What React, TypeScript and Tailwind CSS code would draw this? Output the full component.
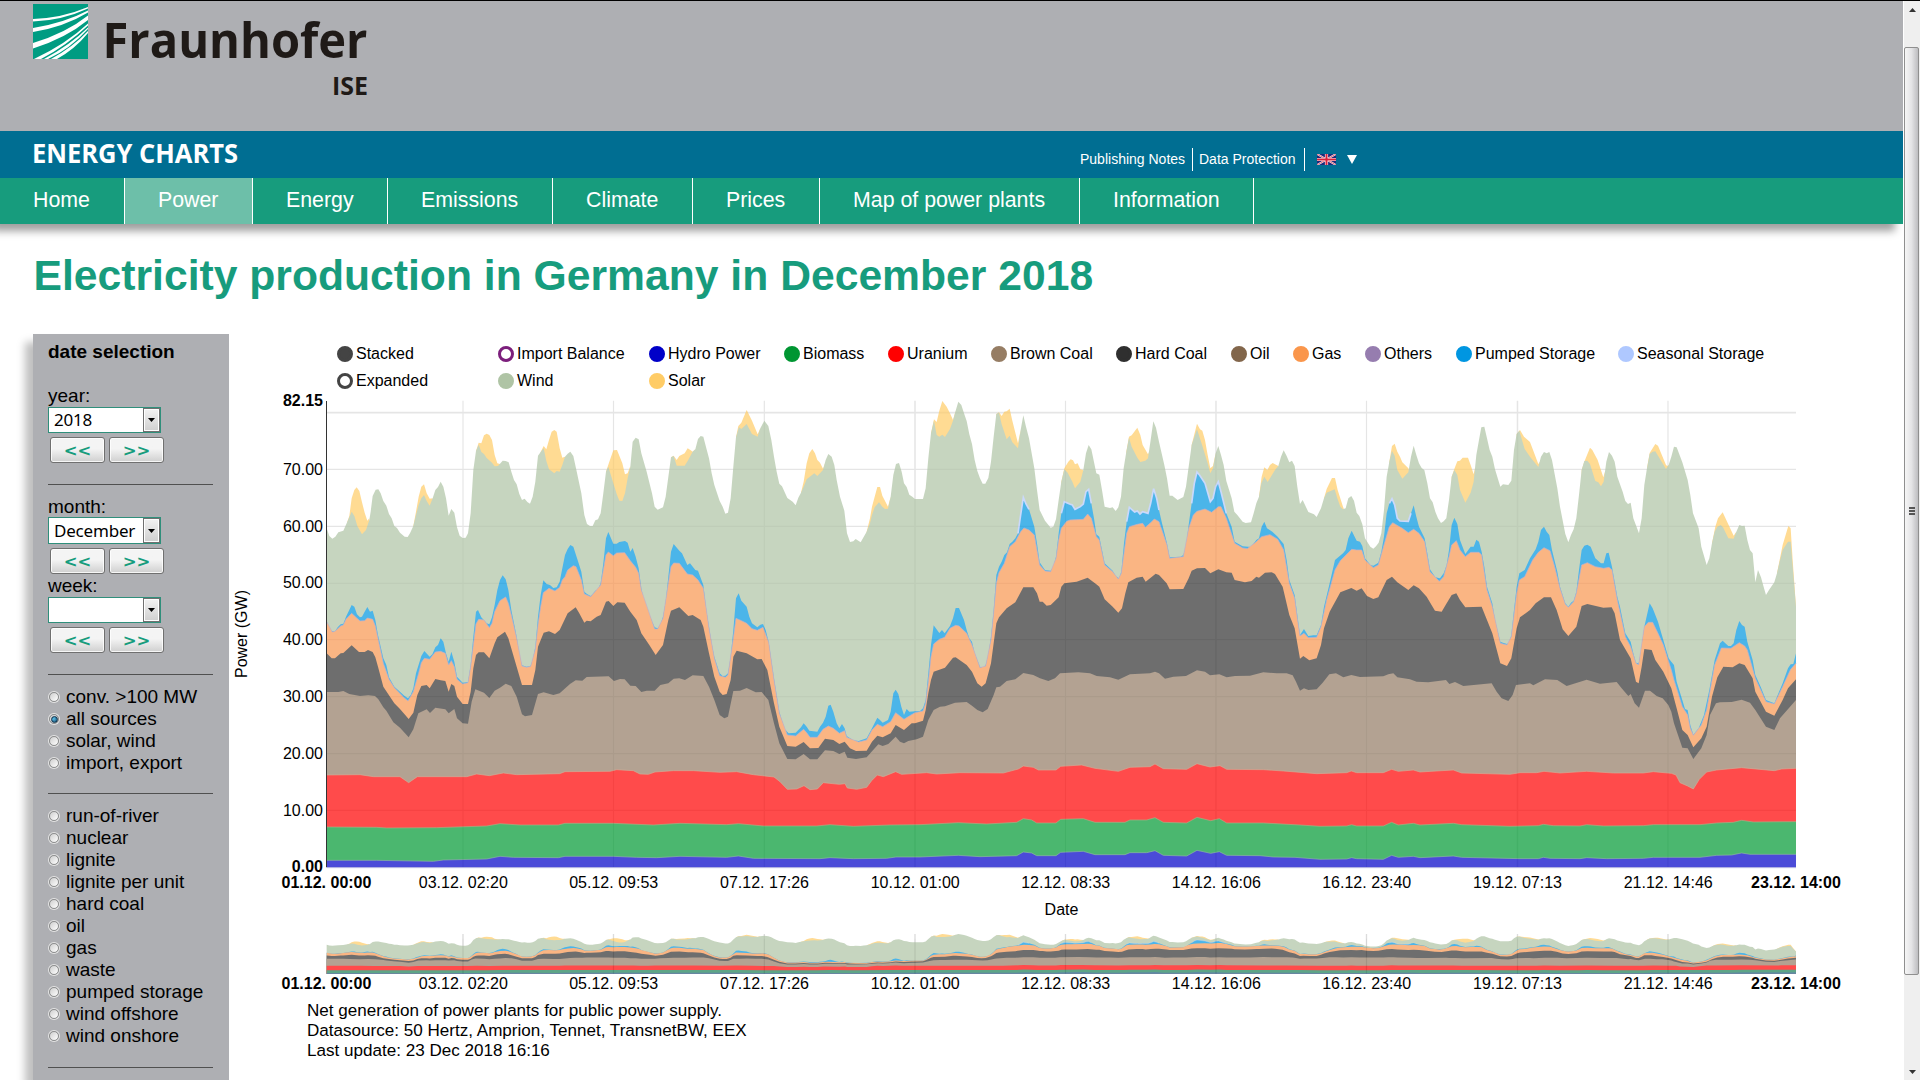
import React from "react";

type Pt = [number, number];

const parse = (s: string): Pt[] =>
  s
    .trim()
    .split(/\s+/)
    .map((p) => p.split(",").map(Number) as Pt);

const BASE = 1432;

const WIND = parse(`20,415 28,438 37,446 46,440 55,427 70,422 82,395 95,365 103,378 112,408 126,433 138,420 148,390 152,365 158,318 167,299 175,298 182,310 190,333 199,347 207,372 215,385 223,408 231,414 240,428 254,440 263,441 270,430 280,408 288,375 296,345 304,325 312,315 320,333 329,347 338,325 346,300 354,291 362,275 370,290 378,325 386,377 394,357 403,368 411,412 419,437 428,444 437,443 444,430 452,370 460,240 468,183 476,164 484,186 492,192 500,204 516,218 524,229 534,228 548,212 557,213 566,217 574,245 582,270 590,283 598,312 606,330 614,326 622,336 630,341 638,320 646,275 654,197 662,186 671,175 679,213 687,238 703,250 710,243 719,245 727,225 735,200 743,191 751,185 760,198 768,235 784,310 793,375 801,402 810,408 818,408 826,391 834,388 842,370 850,310 858,245 865,230 880,280 890,312 898,332 907,333 915,310 923,265 931,230 938,155 947,143 956,148 964,190 980,245 996,310 1004,350 1013,359 1029,352 1037,320 1053,202 1061,198 1070,227 1094,227 1103,213 1118,185 1126,178 1134,147 1142,138 1150,140 1159,175 1167,205 1175,250 1183,285 1199,333 1208,350 1216,371 1224,368 1232,325 1240,230 1248,142 1257,112 1264,117 1280,102 1296,132 1313,140 1321,115 1333,92 1345,108 1354,150 1362,200 1370,245 1378,281 1386,289 1402,324 1418,335 1427,346 1435,323 1443,308 1451,290 1460,268 1483,250 1492,258 1509,240 1517,210 1525,192 1535,200 1543,225 1550,270 1560,320 1573,362 1581,430 1590,456 1600,454 1607,447 1622,457 1631,441 1640,425 1650,400 1656,375 1664,352 1677,337 1687,350 1695,357 1704,356 1712,320 1720,255 1728,222 1737,219 1745,245 1752,280 1760,291 1768,314 1777,320 1785,327 1809,327 1817,295 1825,205 1833,130 1842,92 1850,135 1858,140 1867,134 1875,141 1890,117 1899,92 1907,62 1915,35 1924,45 1932,70 1940,93 1948,133 1956,162 1964,210 1972,243 1980,265 1988,281 1996,281 2005,264 2013,215 2021,140 2029,72 2037,68 2045,103 2060,148 2069,137 2077,157 2094,175 2102,120 2110,76 2118,110 2127,145 2143,235 2151,300 2159,360 2175,392 2192,413 2200,410 2208,388 2216,330 2224,275 2233,238 2243,248 2257,275 2265,295 2281,275 2290,240 2298,190 2306,165 2314,178 2329,250 2338,254 2346,300 2354,350 2370,354 2378,352 2387,363 2395,352 2403,320 2411,235 2419,185 2427,143 2435,170 2452,203 2461,216 2476,212 2484,205 2492,150 2500,94 2508,113 2517,155 2533,225 2541,265 2549,317 2557,317 2573,330 2590,321 2598,290 2606,230 2615,165 2631,118 2647,167 2663,220 2671,250 2679,235 2687,190 2695,168 2703,195 2711,225 2719,273 2735,325 2743,365 2752,375 2768,395 2777,399 2793,397 2801,370 2809,340 2817,320 2824,280 2833,260 2843,276 2865,240 2875,228 2883,200 2891,181 2900,198 2908,217 2916,212 2924,228 2932,290 2940,342 2948,330 2965,366 2982,373 2990,381 3003,355 3012,325 3020,308 3044,298 3052,325 3061,350 3069,358 3077,355 3085,325 3094,318 3102,332 3110,368 3118,378 3127,403 3135,445 3151,470 3160,476 3168,469 3176,458 3184,430 3192,360 3200,260 3208,215 3216,183 3224,197 3232,240 3247,266 3265,247 3273,200 3281,167 3289,195 3297,220 3305,234 3313,240 3322,280 3330,325 3338,337 3346,365 3354,385 3363,399 3371,394 3379,385 3387,330 3395,260 3403,240 3412,255 3420,300 3436,338 3452,308 3461,275 3469,195 3477,150 3484,112 3493,110 3501,145 3509,180 3517,200 3525,238 3541,290 3549,283 3565,285 3574,272 3582,180 3590,132 3598,122 3606,150 3614,177 3630,200 3655,231 3663,200 3672,186 3680,190 3688,186 3696,210 3712,295 3720,350 3736,432 3745,457 3753,435 3761,418 3769,385 3777,315 3785,240 3793,213 3802,212 3810,222 3826,273 3835,277 3843,289 3851,275 3859,215 3867,186 3876,197 3884,215 3892,260 3908,305 3916,333 3924,342 3932,338 3940,385 3957,430 3965,385 3973,285 3981,235 3989,192 3998,185 4006,184 4038,237 4046,225 4054,200 4062,170 4070,172 4087,217 4103,270 4111,315 4119,370 4136,415 4144,470 4160,525 4168,505 4176,460 4184,425 4192,410 4202,405 4209,412 4225,445 4241,446 4249,425 4258,405 4266,408 4274,407 4282,450 4290,480 4298,490 4306,577 4314,540 4323,562 4330,587 4338,615 4347,600 4363,577 4371,550 4379,515 4388,480 4404,455 4412,455 4418,530 4428,650`);

const SOLAR = [
  "82,395 88,378 95,325 103,300 110,292 118,303 126,337 134,368 142,392 148,385",
  "280,408 288,365 296,320 304,290 312,283 320,310 329,326 338,325",
  "468,183 476,158 484,160 492,136 500,131 508,135 516,150 524,195 532,220 540,222",
  "662,186 671,168 679,178 687,150 695,125 703,120 710,125 719,175 727,203 735,200",
  "858,245 868,215 880,181 891,180 907,220 915,253 923,250 931,228",
  "1053,202 1061,197 1070,210 1078,198 1094,190 1103,175 1111,180 1118,185 1126,178",
  "1248,142 1255,108 1264,98 1280,60 1296,92 1313,133 1321,115",
  "1443,308 1451,275 1460,220 1468,190 1477,177 1485,190 1492,210 1500,218 1509,236 1517,215",
  "1640,425 1650,385 1656,350 1672,291 1680,291 1687,317 1704,350 1712,320",
  "1833,130 1842,88 1850,96 1858,62 1867,33 1880,50 1890,70 1899,90 1907,62",
  "2029,72 2037,67 2045,78 2053,65 2060,64 2069,56 2077,92 2094,160 2102,120",
  "2224,275 2233,235 2245,215 2252,208 2259,211 2265,223 2273,220 2281,238 2290,240",
  "2419,185 2427,140 2435,136 2452,113 2461,135 2468,165 2484,193 2487,187",
  "2615,165 2631,101 2640,118 2647,122 2655,150 2663,195 2671,235 2679,228 2687,190",
  "2817,320 2825,260 2833,232 2842,240 2850,225 2858,219 2865,223 2875,228",
  "3012,325 3020,297 3036,264 3045,264 3053,300 3069,350 3072,358",
  "3208,215 3216,168 3224,161 3232,185 3240,200 3247,217 3265,235 3267,240",
  "3395,260 3403,237 3412,214 3420,212 3428,203 3444,203 3452,225 3461,253 3465,235",
  "3590,132 3600,120 3612,140 3630,156 3655,222 3660,215",
  "3785,240 3793,215 3810,173 3817,180 3833,210 3850,262 3855,245",
  "3981,235 3989,189 3998,175 4006,162 4014,167 4038,225 4042,228 4046,225",
  "4176,460 4186,410 4194,385 4208,367 4241,437 4249,425",
  "4371,550 4379,510 4388,465 4397,435 4405,408 4412,415 4418,510 4428,650",
].map(parse);

const PUMPED = parse(`20,692 28,718 37,724 45,724 53,712 62,703 70,701 78,680 95,645 103,650 111,673 120,682 126,680 134,665 142,651 150,665 158,662 166,690 174,735 190,805 199,825 207,862 223,890 240,905 254,918 264,925 272,915 280,895 288,850 304,798 313,783 329,800 337,793 346,772 354,765 362,745 370,755 378,790 386,815 394,785 403,815 411,860 428,878 444,876 452,825 460,740 468,665 474,660 484,682 500,700 508,703 516,682 524,645 532,600 540,570 548,556 557,568 565,600 574,660 582,700 590,740 598,795 606,826 620,830 632,827 638,810 646,770 654,680 662,615 670,571 680,582 690,585 700,594 710,592 719,575 727,535 735,495 743,477 751,465 760,470 776,520 784,545 793,605 801,612 812,618 818,612 826,602 834,598 842,580 850,520 858,445 865,426 880,461 890,461 898,456 915,453 923,458 931,485 938,474 947,500 956,535 964,595 972,635 988,675 1004,712 1013,715 1021,705 1029,680 1037,635 1045,560 1053,485 1061,462 1078,482 1086,490 1102,525 1110,520 1126,540 1134,542 1150,585 1159,660 1167,710 1175,760 1183,800 1199,850 1208,858 1216,857 1224,850 1232,800 1240,720 1248,625 1256,610 1264,632 1280,650 1288,680 1296,700 1312,712 1321,704 1329,702 1337,720 1346,755 1362,865 1378,965 1394,1018 1406,1030 1427,1028 1443,1012 1451,1000 1460,1010 1468,1022 1492,1025 1500,1010 1509,998 1517,980 1525,947 1532,944 1540,965 1550,1000 1558,1015 1566,1002 1574,1015 1580,1038 1600,1051 1616,1053 1640,1045 1656,1015 1672,983 1680,990 1688,998 1704,990 1712,965 1720,910 1727,899 1735,912 1744,950 1752,975 1760,957 1768,965 1785,964 1800,963 1809,955 1817,930 1825,850 1833,765 1841,706 1858,729 1866,720 1874,730 1890,708 1899,685 1907,654 1917,654 1932,690 1940,720 1948,745 1956,755 1964,790 1980,830 1990,833 1997,825 2005,795 2013,740 2021,660 2029,555 2037,530 2045,515 2053,495 2061,487 2069,462 2077,455 2086,445 2094,430 2102,375 2110,322 2118,342 2127,358 2143,410 2151,460 2159,517 2175,540 2192,542 2200,530 2208,500 2216,430 2224,370 2233,335 2249,342 2257,345 2265,358 2281,350 2290,342 2298,305 2306,298 2314,340 2322,385 2329,433 2338,440 2346,480 2354,520 2370,535 2378,542 2387,558 2397,565 2404,545 2412,460 2420,395 2428,352 2444,366 2452,363 2460,372 2468,365 2484,370 2492,340 2501,296 2510,325 2517,360 2525,395 2541,460 2549,502 2582,500 2590,495 2598,470 2606,405 2615,340 2623,280 2631,246 2639,256 2655,280 2671,335 2679,325 2687,290 2695,275 2703,305 2719,370 2735,410 2744,455 2768,469 2793,471 2809,450 2817,445 2825,410 2833,395 2841,415 2857,425 2873,440 2891,462 2900,510 2908,570 2924,615 2932,675 2940,735 2952,717 2965,738 2980,736 2990,736 3003,705 3012,650 3029,580 3045,510 3069,490 3077,480 3085,445 3095,422 3110,452 3120,455 3127,468 3135,505 3151,525 3160,527 3175,518 3184,485 3192,440 3200,370 3208,340 3216,326 3224,345 3232,385 3240,393 3265,394 3273,370 3281,346 3289,380 3297,410 3314,445 3322,490 3330,538 3346,562 3360,565 3371,550 3380,525 3387,480 3395,405 3403,383 3412,402 3420,450 3436,492 3452,470 3461,470 3469,449 3477,455 3485,485 3493,530 3501,590 3517,640 3525,690 3541,755 3549,758 3561,762 3568,757 3574,735 3582,660 3590,590 3598,550 3614,540 3630,505 3647,478 3655,455 3663,420 3672,410 3680,425 3688,435 3696,480 3712,545 3720,590 3736,640 3745,650 3753,638 3761,632 3769,605 3777,540 3785,480 3793,467 3802,464 3812,470 3826,505 3843,520 3851,520 3859,490 3866,488 3876,530 3892,620 3900,650 3916,730 3932,755 3940,790 3948,818 3956,820 3964,780 3973,710 3981,675 3989,640 3998,655 4014,695 4030,750 4046,805 4054,815 4062,825 4070,875 4087,930 4095,957 4103,960 4111,1005 4120,1034 4136,1015 4152,975 4168,900 4184,810 4200,760 4208,752 4225,768 4233,768 4241,760 4249,720 4258,693 4266,705 4274,710 4282,755 4298,810 4306,855 4322,890 4338,930 4363,940 4371,920 4388,880 4404,835 4412,823 4420,822 4428,790`);

const GAS = parse(`20,695 37,726 45,724 62,708 70,705 78,688 95,670 111,685 120,693 134,692 142,684 158,688 166,708 174,745 190,820 207,868 223,893 254,925 264,933 280,905 296,850 304,818 313,805 329,808 346,786 362,784 376,790 386,825 394,812 403,830 411,868 428,882 444,878 452,830 460,765 468,702 476,688 492,690 508,713 516,700 524,665 540,632 557,621 565,640 574,675 590,745 606,828 620,832 632,829 646,778 654,705 662,650 670,608 687,595 705,603 719,592 727,570 735,560 743,540 760,527 768,530 784,570 793,612 812,620 842,585 858,495 865,486 880,497 890,489 914,488 931,512 947,532 956,550 964,600 1004,717 1013,717 1029,685 1045,580 1053,530 1061,519 1078,520 1102,552 1118,555 1134,570 1150,595 1167,715 1183,805 1199,857 1216,862 1224,855 1240,745 1248,685 1264,692 1280,700 1296,716 1312,721 1329,712 1346,757 1362,870 1378,970 1402,1035 1427,1038 1451,1018 1460,1028 1470,1042 1492,1042 1509,1018 1525,1008 1540,1015 1558,1030 1574,1022 1580,1042 1616,1056 1640,1050 1656,1020 1672,1003 1688,1010 1712,995 1727,968 1752,988 1768,978 1785,968 1809,963 1817,940 1825,875 1833,800 1841,762 1858,748 1874,742 1890,715 1907,706 1917,708 1940,730 1956,765 1980,833 1997,828 2013,750 2021,670 2029,580 2037,548 2053,520 2069,470 2086,455 2102,425 2112,414 2127,420 2143,435 2159,525 2175,543 2192,545 2208,505 2216,450 2224,415 2240,394 2250,390 2290,388 2303,372 2314,385 2329,440 2338,450 2354,525 2378,545 2395,567 2404,550 2420,430 2428,410 2452,403 2468,400 2476,412 2492,398 2503,387 2517,395 2541,465 2549,505 2590,500 2606,415 2620,375 2631,364 2655,357 2675,367 2695,350 2703,350 2719,385 2744,460 2768,474 2782,476 2809,455 2825,440 2850,434 2873,448 2891,480 2908,580 2924,625 2932,685 2940,738 2952,730 2965,743 2990,742 3003,710 3020,630 3045,540 3061,512 3095,478 3110,480 3125,480 3135,510 3160,533 3175,525 3192,465 3208,410 3218,398 3247,415 3265,428 3281,418 3297,430 3314,455 3330,545 3358,574 3371,560 3387,500 3395,465 3409,452 3420,480 3436,500 3452,487 3477,487 3485,495 3501,600 3517,650 3541,760 3561,765 3574,740 3590,610 3598,570 3614,560 3638,510 3655,487 3672,473 3690,482 3704,530 3720,595 3736,643 3745,652 3761,635 3769,610 3785,525 3802,518 3826,530 3851,535 3867,532 3876,540 3892,630 3916,740 3932,770 3948,820 3956,824 3973,710 3985,697 3998,697 4014,730 4030,765 4054,840 4062,870 4087,950 4103,975 4111,1015 4120,1036 4144,1005 4160,960 4184,825 4204,774 4233,775 4258,758 4274,768 4282,780 4306,865 4338,935 4363,942 4388,890 4412,838 4428,820`);

const HARD = parse(`20,790 35,805 45,805 62,790 70,789 95,766 117,786 134,786 144,780 158,786 166,802 174,830 190,890 223,940 240,957 266,987 280,968 292,915 304,888 320,885 329,895 346,867 362,871 376,873 386,905 394,882 403,888 411,920 428,942 444,942 452,905 460,835 468,795 476,787 492,787 508,805 524,760 532,742 555,725 565,745 590,830 606,885 636,885 646,840 654,770 671,728 687,724 705,732 719,720 743,670 767,652 777,668 793,698 800,692 812,694 830,680 842,675 858,635 866,633 880,648 892,637 914,638 931,665 950,690 964,730 988,765 1007,795 1029,765 1045,690 1053,662 1078,652 1105,678 1118,675 1142,690 1150,710 1167,790 1183,860 1199,905 1208,915 1220,912 1232,870 1240,800 1250,782 1280,790 1312,808 1325,807 1342,840 1362,940 1378,1010 1402,1068 1427,1070 1451,1056 1470,1075 1495,1074 1515,1046 1540,1050 1558,1062 1574,1055 1590,1075 1608,1083 1640,1082 1656,1055 1672,1037 1688,1042 1712,1030 1727,1005 1752,1020 1775,1000 1785,1000 1809,992 1817,960 1825,910 1833,870 1841,845 1875,833 1899,803 1907,802 1940,825 1956,845 1972,880 1985,890 1997,880 2013,820 2021,760 2029,700 2037,682 2060,655 2086,637 2110,592 2140,592 2151,610 2159,635 2168,635 2180,647 2192,645 2216,622 2224,590 2233,580 2270,575 2303,563 2329,583 2338,590 2354,628 2378,650 2395,668 2406,655 2416,610 2425,577 2450,563 2468,560 2477,575 2492,563 2507,551 2517,555 2540,580 2549,598 2590,597 2606,565 2615,542 2631,535 2655,534 2671,550 2695,538 2719,547 2735,548 2744,570 2775,577 2795,573 2809,560 2817,563 2835,548 2855,547 2865,552 2888,590 2908,675 2924,715 2940,806 2950,798 2968,811 2990,805 3003,765 3012,715 3029,665 3061,607 3094,594 3110,602 3125,595 3141,618 3160,627 3175,622 3200,570 3216,560 3232,577 3265,600 3281,586 3297,595 3320,620 3345,662 3365,665 3380,640 3395,615 3409,610 3420,630 3436,652 3485,650 3501,690 3517,730 3541,820 3561,828 3574,805 3590,715 3600,682 3630,660 3647,640 3672,622 3693,622 3710,660 3728,718 3745,738 3769,710 3785,648 3802,642 3850,653 3875,652 3884,670 3900,750 3932,805 3948,875 3956,880 3965,830 3973,777 3995,780 4006,810 4030,845 4054,895 4070,955 4087,1020 4103,1035 4120,1072 4144,1045 4160,1010 4176,920 4192,862 4210,830 4238,832 4258,820 4274,825 4298,865 4306,905 4338,965 4363,977 4388,930 4404,895 4428,868`);

const BROWN = parse(`20,906 55,906 70,903 88,912 120,918 145,916 165,918 175,928 190,952 199,962 220,997 240,1013 266,1042 280,1018 295,970 320,958 330,969 346,953 376,958 386,970 403,957 411,985 428,1000 444,1001 455,935 466,898 492,908 508,924 524,902 540,893 557,881 574,888 590,920 606,973 615,979 636,975 654,912 671,907 700,915 719,910 750,882 767,871 787,872 800,861 866,859 882,873 900,867 914,868 931,887 947,888 964,906 980,902 1004,902 1021,885 1045,880 1061,866 1078,865 1095,870 1118,856 1150,858 1167,890 1183,930 1199,975 1213,985 1224,980 1240,903 1260,902 1280,894 1307,907 1325,906 1345,930 1362,1000 1378,1060 1402,1107 1427,1108 1451,1092 1470,1108 1492,1108 1515,1081 1540,1083 1558,1092 1574,1085 1582,1103 1608,1107 1640,1102 1675,1063 1688,1068 1705,1062 1727,1040 1740,1055 1752,1060 1765,1053 1790,1048 1809,1040 1825,990 1841,960 1860,950 1875,949 1905,938 1940,936 1956,947 1972,960 1988,967 2003,957 2021,915 2029,892 2040,890 2060,873 2086,868 2110,849 2140,855 2160,865 2185,873 2205,865 2220,850 2275,847 2310,850 2330,858 2370,862 2395,869 2430,853 2490,850 2505,845 2517,850 2535,866 2560,860 2598,858 2631,841 2655,845 2670,856 2698,853 2720,862 2745,858 2790,857 2830,847 2870,850 2900,850 2918,856 2928,875 2940,902 2952,895 2965,900 2990,898 3008,878 3028,853 3048,850 3070,862 3094,855 3120,861 3190,859 3205,853 3220,850 3232,862 3270,868 3290,875 3325,877 3378,870 3388,882 3405,876 3430,888 3515,880 3530,905 3545,925 3565,933 3578,915 3588,885 3630,880 3640,886 3675,868 3712,870 3740,888 3800,869 3840,881 3890,876 3905,895 3925,918 3932,912 3944,940 3957,953 3975,902 3990,902 4010,918 4028,925 4045,945 4054,965 4062,1000 4087,1073 4103,1075 4120,1107 4144,1075 4160,1035 4170,975 4188,940 4200,937 4235,936 4265,929 4290,938 4306,960 4338,1010 4363,1020 4380,985 4428,930`);

const URANIUM = parse(`20,1155 120,1154 160,1160 240,1160 266,1178 292,1160 440,1160 470,1152 508,1157 550,1149 590,1154 719,1151 735,1145 870,1144 890,1139 940,1142 960,1152 985,1153 1005,1146 1060,1142 1120,1142 1200,1147 1250,1145 1300,1154 1362,1161 1380,1175 1402,1198 1430,1197 1452,1187 1470,1199 1492,1197 1510,1178 1558,1183 1575,1181 1582,1194 1610,1198 1640,1192 1655,1172 1672,1155 1690,1160 1727,1145 1745,1153 1820,1148 1850,1152 1920,1148 2050,1149 2095,1137 2110,1128 2140,1132 2155,1140 2208,1140 2222,1129 2285,1125 2325,1135 2395,1144 2430,1132 2490,1130 2505,1122 2530,1136 2600,1138 2631,1121 2670,1131 2700,1127 2720,1138 2830,1139 2890,1143 2990,1151 3080,1148 3094,1143 3110,1148 3190,1148 3215,1138 3235,1144 3280,1140 3300,1146 3400,1140 3425,1149 3570,1153 3600,1148 3650,1148 3672,1144 3720,1149 3800,1144 3880,1149 3970,1149 4000,1145 4054,1150 4068,1155 4080,1178 4103,1188 4120,1197 4138,1168 4160,1146 4190,1140 4265,1133 4363,1142 4385,1137 4428,1135`);

const BIOMASS = parse(`20,1311 170,1312 200,1314 350,1313 500,1308 540,1301 600,1305 715,1305 735,1300 880,1300 1000,1305 1080,1300 1220,1304 1255,1301 1330,1308 1490,1308 1530,1304 1600,1309 1710,1305 1800,1304 1915,1298 2000,1302 2090,1297 2110,1286 2135,1290 2150,1299 2208,1299 2222,1288 2290,1286 2325,1297 2415,1297 2430,1290 2480,1290 2505,1283 2530,1297 2600,1299 2631,1282 2672,1292 2698,1286 2720,1299 2830,1299 2940,1305 3000,1309 3080,1308 3095,1304 3110,1308 3190,1308 3215,1297 3235,1305 3280,1300 3300,1305 3400,1300 3425,1304 3570,1309 3655,1307 3670,1303 3700,1307 3780,1308 3800,1304 3850,1308 3970,1307 4000,1304 4140,1304 4190,1299 4240,1297 4265,1291 4300,1296 4428,1295`);

const HYDRO = parse(`20,1411 170,1411 340,1414 370,1410 500,1407 540,1399 580,1402 715,1403 735,1399 880,1399 950,1402 1010,1403 1080,1399 1220,1402 1255,1398 1300,1405 1500,1406 1530,1403 1600,1406 1700,1405 1728,1401 1800,1401 1915,1396 1980,1400 2090,1397 2110,1386 2135,1389 2150,1397 2208,1397 2222,1387 2290,1384 2325,1394 2415,1394 2430,1388 2480,1388 2505,1382 2530,1396 2600,1398 2631,1381 2672,1390 2698,1385 2720,1396 2820,1397 2860,1401 2925,1402 3000,1408 3080,1407 3095,1403 3110,1406 3190,1408 3215,1396 3235,1402 3280,1399 3300,1403 3400,1398 3425,1402 3600,1406 3655,1406 3670,1402 3690,1405 3780,1406 3800,1403 3860,1406 3970,1405 4000,1402 4140,1402 4190,1396 4235,1395 4265,1389 4290,1393 4428,1393`);

const line = (pts: Pt[]) => "M" + pts.map(([x, y]) => `${x},${y}`).join("L");
const area = (pts: Pt[]) => `${line(pts)}V${BASE}H${pts[0][0]}Z`;

const SEASONAL_SPANS: Pt[] = [
  [2094, 2130],
  [2224, 2314],
  [2420, 2517],
  [2615, 2719],
  [3208, 3273],
];
const SEASONAL = SEASONAL_SPANS.map(([a, b]) => line(PUMPED.filter(([x]) => x >= a && x <= b))).join("");

const GRID_X = [429, 880.5, 1333, 1785, 2236.5, 2688, 3139.5, 3592.5, 4044];

function Layers({ mini = false }: { mini?: boolean }) {
  return (
    <g opacity={0.7}>
      {SOLAR.map((s, i) => (
        <path key={i} d={area(s)} fill="#ffcc66" />
      ))}
      <path d={area(WIND)} fill="#afc4a5" />
      <path d={area(PUMPED)} fill="#0096e1" />
      <path d={SEASONAL} fill="none" stroke="#b4c9fb" strokeWidth={mini ? 2 : 5} />
      <path d={area(GAS)} fill="#f99650" />
      {!mini && <path d={line(GAS)} fill="none" stroke="#a88fb4" strokeWidth={3} strokeOpacity={0.7} />}
      <path d={area(HARD)} fill="#323232" />
      <path d={area(BROWN)} fill="#937c65" />
      <path d={area(URANIUM)} fill="#ff0000" />
      <path d={area(BIOMASS)} fill={mini ? "#1b7f55" : "#009a33"} />
      <path d={area(HYDRO)} fill={mini ? "#1c4f8c" : "#0000c8"} />
      {!mini && (
        <g fill="none" strokeWidth={2}>
          <path d={line(URANIUM)} stroke="#c08a6a" />
          <path d={line(BIOMASS)} stroke="#8c8a50" />
          <path d={line(HYDRO)} stroke="#5f9a78" />
        </g>
      )}
    </g>
  );
}

const X_LABELS: [number, string, boolean][] = [
  [326.5, "01.12. 00:00", true],
  [463.3, "03.12. 02:20", false],
  [613.7, "05.12. 09:53", false],
  [764.5, "07.12. 17:26", false],
  [915.2, "10.12. 01:00", false],
  [1065.7, "12.12. 08:33", false],
  [1216.3, "14.12. 16:06", false],
  [1366.7, "16.12. 23:40", false],
  [1517.5, "19.12. 07:13", false],
  [1668.2, "21.12. 14:46", false],
  [1796, "23.12. 14:00", true],
];

const Y_LABELS: [number, string, boolean][] = [
  [406, "82.15", true],
  [475, "70.00", false],
  [532, "60.00", false],
  [588, "50.00", false],
  [645, "40.00", false],
  [702, "30.00", false],
  [759, "20.00", false],
  [816, "10.00", false],
  [872, "0.00", true],
];

const GRID_Y = [68, 238, 409, 580, 749, 920, 1091, 1261];

function PowerChart() {
  return (
    <svg
      className="block h-[606px] w-[1674px] shrink-0"
      viewBox="229 394 1674 606"
      fontFamily='"Liberation Sans", Arial, sans-serif'
      fontSize={16}
    >
      <g transform="translate(320 390) scale(0.33333)">
        {GRID_X.map((x, i) => (
          <line key={x} x1={x} x2={x} y1={32} y2={BASE} stroke="#e5e5e5" strokeWidth={i % 2 && i !== 1 ? 4.5 : 3.5} />
        ))}
        {GRID_Y.map((y) => (
          <line key={y} x1={20} x2={4428} y1={y} y2={y} stroke="#e5e5e5" strokeWidth={y === 68 ? 5 : 3.5} />
        ))}
        <Layers />
        <line x1={20} x2={4428} y1={1433} y2={1433} stroke="#b9b9f0" strokeWidth={3} />
      </g>
      <rect x={326} y={401} width={1} height={466} fill="#333" />
      <g transform="translate(320 933.1) scale(0.33333 0.02836)">
        {GRID_X.map((x) => (
          <line key={x} x1={x} x2={x} y1={32} y2={BASE} stroke="#dcdcdc" strokeWidth={4} />
        ))}
        <Layers mini />
        {GRID_X.map((x) => (
          <line key={x} x1={x} x2={x} y1={200} y2={BASE} stroke="#000" strokeOpacity={0.07} strokeWidth={3} />
        ))}
      </g>
      {Y_LABELS.map(([y, t, b]) => (
        <text key={t} x={323} y={y} textAnchor="end" fontWeight={b ? 700 : 400}>
          {t}
        </text>
      ))}
      {X_LABELS.map(([x, t, b]) => (
        <g key={t} textAnchor="middle" fontWeight={b ? 700 : 400}>
          <text x={x} y={888}>
            {t}
          </text>
          <text x={x} y={989}>
            {t}
          </text>
        </g>
      ))}
      <text x={1061.5} y={915} textAnchor="middle">
        Date
      </text>
      <text transform="translate(247 634) rotate(-90)" textAnchor="middle">
        Power (GW)
      </text>
    </svg>
  );
}

function Legend({ label, color, width, open = false }: { label: string; color: string; width: number; open?: boolean }) {
  return (
    <div className="flex shrink-0 items-center gap-[3px] whitespace-nowrap" style={{ width }}>
      <span
        className="size-4 rounded-full border-[3px]"
        style={{ borderColor: color, backgroundColor: open ? "#fff" : color }}
      />
      <span>{label}</span>
    </div>
  );
}

const NAV: [string, number][] = [
  ["Home", 125],
  ["Power", 128],
  ["Energy", 135],
  ["Emissions", 165],
  ["Climate", 140],
  ["Prices", 127],
  ["Map of power plants", 260],
  ["Information", 174],
];

function Select({ value, height }: { value: string; height: string }) {
  return (
    <div className={`flex w-[113px] border border-[#2f8f7b] bg-white ${height}`}>
      <span className="flex grow items-center pl-[5px] font-['Noto_Sans',sans-serif] text-[17px] tracking-[-0.2px]">
        {value}
      </span>
      <span className="flex w-[17px] items-center justify-center border border-[#707070] bg-linear-to-b from-[#f2f2f2] to-[#cfcfcf] ring-1 ring-white ring-inset">
        <svg className="h-1 w-[7px]" viewBox="0 0 7 4">
          <path d="M0 0H7L3.5 4Z" fill="#000" />
        </svg>
      </span>
    </div>
  );
}

function StepButtons() {
  return (
    <div className="mt-1 ml-0.5 flex gap-1">
      {["<<", ">>"].map((t) => (
        <button
          key={t}
          className="flex h-[26px] w-[55px] items-center justify-center rounded-[3px] border border-[#707070] bg-linear-to-b from-[#f4f4f4] from-45% to-[#cfcfcf] pt-0.5 font-['DejaVu_Sans',sans-serif] text-[16.5px] leading-none font-bold text-[#179c7d] ring-1 ring-white/80 ring-inset"
        >
          {t}
        </button>
      ))}
    </div>
  );
}

function Radio({ label, checked = false }: { label: string; checked?: boolean }) {
  return (
    <label className="flex h-[22px] items-center gap-[7px] whitespace-nowrap">
      <span className="ml-px flex size-[10px] shrink-0 items-center justify-center rounded-full border border-[#8e8f8f] bg-linear-to-br from-[#cfcfcf] to-white ring-1 ring-[#e4e4e4]">
        {checked && (
          <span className="size-[7px] shrink-0 rounded-full border border-[#0b2f4a] bg-radial-[at_35%_35%] from-[#5fc4ee] to-[#0b3c5d]" />
        )}
      </span>
      <span>{label}</span>
    </label>
  );
}

function Rule() {
  return <div className="h-px w-[165px] shrink-0 bg-[#505050]" />;
}

function Sidebar() {
  return (
    <aside className="ml-[33px] flex w-[196px] shrink-0 flex-col bg-[#aeafb3] pt-[7px] pl-[15px] text-[19px] leading-[22px] shadow-[-8px_8px_8px_rgba(0,0,0,0.25)]">
      <h2 className="h-[22px] text-[19px] font-bold">date selection</h2>
      <div className="mt-[22px] h-[22px]">year:</div>
      <Select value="2018" height="h-[26px]" />
      <StepButtons />
      <div className="h-[21px]" />
      <Rule />
      <div className="mt-[10px] h-[22px] leading-[24px]">month:</div>
      <Select value="December" height="h-[27px]" />
      <StepButtons />
      <div className="h-[23px] leading-[23px]">week:</div>
      <Select value="" height="h-[26px]" />
      <StepButtons />
      <div className="h-[21px]" />
      <Rule />
      <div className="mt-[11px] mb-[19px]">
        <Radio label="conv. >100 MW" />
        <Radio label="all sources" checked />
        <Radio label="solar, wind" />
        <Radio label="import, export" />
      </div>
      <Rule />
      <div className="mt-[11px] mb-5">
        {[
          "run-of-river",
          "nuclear",
          "lignite",
          "lignite per unit",
          "hard coal",
          "oil",
          "gas",
          "waste",
          "pumped storage",
          "wind offshore",
          "wind onshore",
        ].map((l) => (
          <Radio key={l} label={l} />
        ))}
      </div>
      <Rule />
    </aside>
  );
}

function Logo() {
  return (
    <svg className="block h-[100px] w-[340px] overflow-visible" viewBox="33 1 340 100">
      <rect x={33} y={4} width={55} height={55} fill="#009c82" />
      <g fill="#fff">
        <path d="M33 19Q62 18 88 7V8.500Q62 20.500 33 21.500Z" />
        <path d="M33 28Q64 23 88 10.500V12.500Q64 27 33 32Z" />
        <path d="M33 43Q66 33 88 15.500V20Q66 38 33 48.500Z" />
        <path d="M34 59Q66 44 88 23.500V25.500Q66 46 41 59Z" />
        <path d="M44 59Q70 45 88 27.500V29Q70 49 48 59Z" />
        <path d="M51 59Q73 47 88 31V33Q75 49 57 59Z" />
      </g>
      <g fill="#1f1a17" fontFamily='"Open Sans", "Noto Sans", sans-serif'>
        <text x={102.5} y={58} fontSize={49} fontWeight={700} textLength={265} lengthAdjust="spacingAndGlyphs">
          Fraunhofer
        </text>
        <text x={332} y={95} fontSize={25.5} fontWeight={700} textLength={36} lengthAdjust="spacingAndGlyphs">
          ISE
        </text>
      </g>
    </svg>
  );
}

function Flag() {
  return (
    <svg className="h-[11px] w-[19px]" viewBox="0 0 19 11">
      <rect width={19} height={11} fill="#1d2a7a" />
      <path d="M0 0L19 11M19 0L0 11" stroke="#fff" strokeWidth={1.9} />
      <path d="M0 0L19 11M19 0L0 11" stroke="#d8213b" strokeWidth={0.7} />
      <path d="M9.500 0V11M0 5.500H19" stroke="#fff" strokeWidth={3.2} />
      <path d="M9.500 0V11M0 5.500H19" stroke="#d8213b" strokeWidth={2} />
    </svg>
  );
}

function Scrollbar() {
  return (
    <div className="flex w-[17px] shrink-0 flex-col border-l border-white bg-[#efefef]">
      <div className="flex h-[46px] justify-center pt-[7px]">
        <svg className="h-1 w-[7px]" viewBox="0 0 7 4">
          <path d="M0 4H7L3.500 0Z" fill="#333" />
        </svg>
      </div>
      <div className="mr-px flex h-[928px] items-center justify-center rounded-[2px] border border-[#8f8f8f] bg-linear-to-r from-[#f6f6f6] via-[#e4e4e6] to-[#bdbdc0]">
        <div className="flex w-[6px] flex-col gap-px">
          <span className="h-0.5 bg-[#555]" />
          <span className="h-0.5 bg-[#555]" />
          <span className="h-0.5 bg-[#555]" />
        </div>
      </div>
      <div className="flex grow items-end justify-center pb-[6px]">
        <svg className="h-1 w-[7px]" viewBox="0 0 7 4">
          <path d="M0 0H7L3.500 4Z" fill="#333" />
        </svg>
      </div>
    </div>
  );
}

export default function App() {
  return (
    <div className="flex h-[1080px] w-[1920px] flex-col overflow-hidden border-t border-black bg-white font-['Liberation_Sans',Arial,sans-serif] text-black">
      <div className="flex min-h-0 grow">
        <div className="flex w-[1903px] shrink-0 flex-col overflow-hidden">
          <header className="w-full shrink-0 shadow-[-8px_7px_8px_rgba(0,0,0,0.38)]">
            <div className="h-[130px] bg-[#aeafb3] pl-[33px]">
              <Logo />
            </div>
            <div className="flex h-[47px] bg-[#006e92] text-white">
              <div className="w-[1080px] shrink-0 pl-[33px]">
                <svg className="block h-[47px] w-[210px] overflow-visible" viewBox="0 0 210 47">
                  <text
                    x={-1}
                    y={32}
                    fill="#fff"
                    fontFamily='"Open Sans", sans-serif'
                    fontSize={26}
                    fontWeight={700}
                    textLength={206}
                    lengthAdjust="spacingAndGlyphs"
                  >
                    ENERGY CHARTS
                  </text>
                </svg>
              </div>
              <div className="mt-[17px] flex h-[23px] items-center text-[14px]">
                <span className="flex h-full w-[113px] items-center border-r border-white">Publishing Notes</span>
                <span className="flex h-full w-[112px] items-center border-r border-white pl-[6px]">
                  Data Protection
                </span>
                <span className="ml-3">
                  <Flag />
                </span>
                <svg className="ml-[11px] h-[9px] w-[10px]" viewBox="0 0 10 9">
                  <path d="M0 0H10L5 9Z" fill="#fff" />
                </svg>
              </div>
            </div>
            <nav className="flex h-[46px] bg-[#179c7d] text-[21.33px] text-white">
              {NAV.map(([label, w]) => (
                <a
                  key={label}
                  className={`flex items-center border-r border-white pl-[33px] whitespace-nowrap ${label === "Power" ? "bg-[#6dbfa9]" : ""}`}
                  style={{ width: w }}
                >
                  {label}
                </a>
              ))}
            </nav>
          </header>
          <h1 className="mt-[26px] mb-px h-[50px] shrink-0 pl-[33.5px] text-[42.67px] leading-[50px] font-bold whitespace-nowrap text-[#179c7d]">
            Electricity production in Germany in December 2018
          </h1>
          <div className="mt-[33px] flex min-h-0 grow">
            <Sidebar />
            <main className="flex grow flex-col">
              <div className="flex h-[60px] shrink-0 flex-col pt-[6px] pl-[108px] text-[16px]">
                <div className="flex h-[27px]">
                  <Legend label="Stacked" color="#444444" width={161} />
                  <Legend label="Import Balance" color="#7c1f7c" width={151} open />
                  <Legend label="Hydro Power" color="#0000c8" width={135} />
                  <Legend label="Biomass" color="#009632" width={104} />
                  <Legend label="Uranium" color="#ff0000" width={103} />
                  <Legend label="Brown Coal" color="#967d64" width={125} />
                  <Legend label="Hard Coal" color="#2f2f2f" width={115} />
                  <Legend label="Oil" color="#82664b" width={62} />
                  <Legend label="Gas" color="#fa964b" width={72} />
                  <Legend label="Others" color="#967daf" width={91} />
                  <Legend label="Pumped Storage" color="#0096e1" width={162} />
                  <Legend label="Seasonal Storage" color="#afc8ff" width={150} />
                </div>
                <div className="flex h-[27px]">
                  <Legend label="Expanded" color="#444444" width={161} open />
                  <Legend label="Wind" color="#afc4a5" width={151} />
                  <Legend label="Solar" color="#ffcc66" width={135} />
                </div>
              </div>
              <PowerChart />
              <div className="pt-px pl-[78px] text-[17.07px] leading-5">
                <p>Net generation of power plants for public power supply.</p>
                <p>Datasource: 50 Hertz, Amprion, Tennet, TransnetBW, EEX</p>
                <p>Last update: 23 Dec 2018 16:16</p>
              </div>
            </main>
          </div>
        </div>
        <Scrollbar />
      </div>
    </div>
  );
}
